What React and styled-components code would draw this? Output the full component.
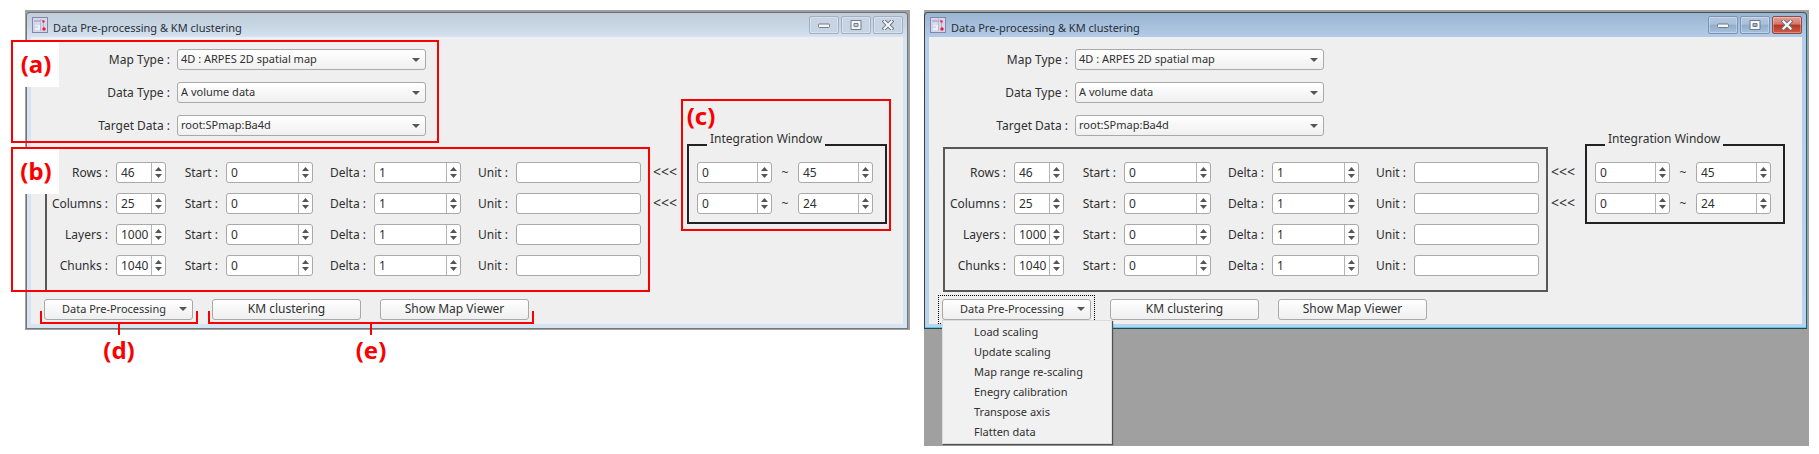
import React, { useId, useState } from "react";
import styled, { createGlobalStyle, css } from "styled-components";

const GlobalStyle = createGlobalStyle`
  *, *::before, *::after { box-sizing: border-box; }
  body {
    margin: 0;
    background: #fff;
    color: #303030;
    font-family: "Noto Sans", "Open Sans", sans-serif;
    font-size: 12px;
    line-height: 18px;
  }
  button, input, select { font: inherit; color: inherit; }
`;

const RED = "#fb0000";

/* ---------- page ---------- */

const Figure = styled.main`
  display: grid;
  grid-template-columns: 1fr 1fr;
  gap: 14px;
  min-height: 100vh;
  padding: 10px 10px 8px 25px;
`;

const Desktop = styled.section`
  align-self: ${(p) => (p.$fill ? "stretch" : "start")};
  min-width: 885px;
  padding: ${(p) => (p.$fill ? "2px 2px 0 0" : "2px 2px 1px 1px")};
  background: #a0a0a0;
`;

/* ---------- window frame ---------- */

const Window = styled.div`
  padding: 0 4px 4px;
  border: 1px solid;
  border-radius: 4px 4px 0 0;
  ${(p) =>
    p.$active
      ? css`
          border-color: #4a4f55 #17687c #1c4a58 #3c4248;
          background: linear-gradient(#9ab4d2, #b5cde8 26px, #bbd2ec);
          box-shadow: inset 0 -1px #5cc8e6;
        `
      : css`
          border-color: #6b6e72 #747678 #747678 #747678;
          background: linear-gradient(#c0cedc, #c9d7e5 14px, #d7e4f2 26px);
        `}
`;

const TitleBar = styled.header`
  display: flex;
  align-items: center;
  height: 24px;
  padding-left: 1px;
`;

const Title = styled.h1`
  flex: 1;
  margin: 5px 0 0 5px;
  font-size: 11px;
  font-weight: 400;
  line-height: 16px;
  color: #2a2f36;
`;

const Caption = styled.div`
  display: flex;
  gap: 2px;
`;

const CaptionButton = styled.button`
  display: grid;
  place-items: center;
  width: 30px;
  height: 18px;
  padding: 0;
  border: 1px solid ${(p) => (p.$tone === "idle" ? "#a2b0c2" : p.$tone === "close" ? "#8c4a4a" : "#7c93b4")};
  border-radius: 2px;
  box-shadow: inset 0 0 0 1px rgba(255, 255, 255, 0.3);
  background: ${(p) =>
    p.$tone === "idle"
      ? "#c6d4e3"
      : p.$tone === "close"
        ? "linear-gradient(#e2a097, #d4776a 45%, #b83420 50%, #cf5b45)"
        : "linear-gradient(#b4c8df, #a9c0da 45%, #92adcc 50%, #a6c0dd)"};
`;

const Client = styled.div`
  padding: 12px 0 4px;
  background: #efefef;
`;

/* ---------- form parts ---------- */

const SourceForm = styled.div`
  position: relative;
  display: grid;
  grid-template-columns: 139px 249px;
  gap: 12px 7px;
  width: max-content;
`;

const FieldLabel = styled.label`
  justify-self: end;
  line-height: 21px;
  white-space: nowrap;
`;

const SelectBox = styled.div`
  display: grid;
  grid-template-columns: 1fr 14px;
  align-items: center;
`;

const Select = styled.select`
  grid-area: 1 / 1 / 2 / 3;
  appearance: none;
  height: 21px;
  padding: 0 3px 2px;
  border: 1px solid #a9a9a9;
  border-radius: 3px;
  background: linear-gradient(#fff, #f0f0f0);
  font-size: 11px;
  line-height: 16px;
`;

const DropMark = styled.span`
  grid-area: 1 / 2;
  width: 0;
  border: 4px solid transparent;
  border-top-color: #555;
  border-bottom: 0;
  pointer-events: none;
`;

const Middle = styled.div`
  display: flex;
  align-items: flex-start;
  padding: 11px 0 7px 14px;
`;

const Anchor = styled.div`
  position: relative;
`;

const AxisPanel = styled.div`
  display: grid;
  grid-template-columns: 61px 50px 44px 87px 45px 87px 39px 125px;
  gap: 10px 8px;
  padding: 13px 7px 14px 0;
  border: 2px solid #585858;
`;

const SpinBox = styled.div`
  display: grid;
  grid-template-columns: 1fr 14px;
  height: 21px;
  border: 1px solid #a9a9a9;
  border-radius: 3px;
  background: #fff;
`;

const SpinInput = styled.input`
  appearance: textfield;
  min-width: 0;
  padding: 0 0 0 4px;
  border: 0;
  background: none;
  outline: none;
  &::-webkit-inner-spin-button { appearance: none; }
`;

const Steps = styled.div`
  display: flex;
  flex-direction: column;
  justify-content: center;
  gap: 3px;
  border-left: 1px solid #b4b4b4;
`;

const StepButton = styled.button`
  display: grid;
  place-items: center;
  height: 4px;
  padding: 0;
  border: 0;
  background: none;
`;

const TextInput = styled.input`
  height: 21px;
  min-width: 0;
  padding: 0 4px;
  border: 1px solid #a9a9a9;
  border-radius: 3px;
  background: #fff;
`;

const Pointers = styled.div`
  display: grid;
  gap: 10px;
  width: 37px;
  padding: 14px 0 0 3px;
  font-size: 14px;
  line-height: 21px;
`;

const RangeAnchor = styled(Anchor)`
  margin-top: -17px;
`;

const RangeGroup = styled.fieldset`
  display: grid;
  grid-template-columns: 75px 26px 75px;
  row-gap: 10px;
  margin: 0;
  padding: 2px 12px 8px 8px;
  border: 2px solid #222;
`;

const RangeLegend = styled.legend`
  margin-left: 10px;
  padding: 0 3px 12px;
  white-space: nowrap;
`;

const Tilde = styled.span`
  line-height: 21px;
  text-align: center;
`;

/* ---------- buttons and menu ---------- */

const Actions = styled.div`
  display: flex;
  gap: 19px;
  padding-left: 13px;
`;

const ActionPair = styled(Anchor)`
  display: flex;
  gap: 19px;
`;

const PushButton = styled.button`
  display: flex;
  align-items: center;
  justify-content: center;
  width: 149px;
  height: 21px;
  padding: 0 0 1px;
  border: 1px solid #a9a9a9;
  border-radius: 3px;
  background: linear-gradient(#fff, #efefef);
  white-space: nowrap;
`;

const MenuButton = styled(PushButton)`
  justify-content: space-between;
  padding: 0 5px 1px 17px;
  font-size: 11px;
`;

const FocusMark = styled.span`
  position: absolute;
  inset: -4px;
  border: 1px dotted #000;
  pointer-events: none;
`;

const Menu = styled.ul`
  position: absolute;
  z-index: 2;
  top: 100%;
  left: 0;
  width: 170px;
  margin: 0;
  padding: 1px 0;
  border: 1px solid #dcdcdc;
  background: #f1f1f1;
  box-shadow: 1px 1px 1px #505050;
  list-style: none;
`;

const MenuItem = styled.button`
  display: block;
  width: 100%;
  height: 20px;
  padding: 0 0 0 31px;
  border: 0;
  background: none;
  font-size: 11px;
  text-align: left;
`;

/* ---------- callouts ---------- */

const Callout = styled.div`
  position: absolute;
  z-index: 1;
  inset: ${(p) => p.$inset};
  border: 2px solid ${RED};
  pointer-events: none;
`;

const Tag = styled.strong`
  display: grid;
  place-items: center;
  width: ${(p) => (p.$solid ? 46 : 36)}px;
  height: ${(p) => (p.$solid ? 45 : 30)}px;
  padding-bottom: 2px;
  background: ${(p) => (p.$solid ? "#fff" : "none")};
  color: ${RED};
  font-size: 24px;
  line-height: 30px;
`;

const Bracket = styled.div`
  position: absolute;
  z-index: 1;
  inset: 12px -5px -4px -4px;
  border: 2px solid ${RED};
  border-top: 0;
  pointer-events: none;
`;

const BracketTag = styled.div`
  position: absolute;
  top: 100%;
  left: 0;
  right: 0;
  display: flex;
  flex-direction: column;
  align-items: center;
  &::before {
    content: "";
    width: 2px;
    height: 13px;
    background: ${RED};
  }
`;

/* ---------- drawings ---------- */

const IconFrame = styled.svg`
  display: block;
  flex: none;
`;

const PanelIcon = () => (
  <IconFrame width="16" height="16" viewBox="0 0 16 16" aria-hidden="true">
    <rect x="0.5" y="0.5" width="15" height="15" fill="#d6d6f0" stroke="#8485aa" />
    <path d="M2 3h6v2H2z" fill="#b4b8cc" />
    <path d="M3 6h5v7H3z" fill="#eef0f8" />
    <path d="M2 7h6M2 10h4" stroke="#c0c4d4" />
    <path d="M8.5 2v12" stroke="#b5b7d2" />
    <path d="M11.5 3v9" stroke="#c9a6c0" />
    <path d="M9.5 3.5h2" stroke="#d88" />
    <circle cx="11.5" cy="4.5" r="1.3" fill="#e03c44" />
    <circle cx="12" cy="12" r="1.7" fill="#e81f2c" />
  </IconFrame>
);

const MinimizeIcon = () => (
  <svg width="12" height="10" viewBox="0 0 12 10" aria-hidden="true">
    <rect x="0.5" y="4" width="11" height="3.5" rx="1" fill="#f6f6f6" stroke="#6f7a8a" />
  </svg>
);

const MaximizeIcon = () => (
  <svg width="12" height="10" viewBox="0 0 12 10" aria-hidden="true">
    <path d="M1 .5h10v9H1zM4 3.5h4v3H4z" fill="#f6f6f6" fillRule="evenodd" stroke="#6f7a8a" />
  </svg>
);

const CloseIcon = () => (
  <svg width="12" height="10" viewBox="0 0 12 10" aria-hidden="true">
    <path d="M2.5 1.5l7 7M9.5 1.5l-7 7" stroke="#656f7e" strokeWidth="4" strokeLinecap="square" />
    <path d="M2.5 1.5l7 7M9.5 1.5l-7 7" stroke="#f6f6f6" strokeWidth="2.2" strokeLinecap="square" />
  </svg>
);

const StepIcon = ({ up }) => (
  <svg width="7" height="4" viewBox="0 0 7 4" aria-hidden="true">
    <path d={up ? "M0 4L3.5 0 7 4z" : "M0 0L3.5 4 7 0z"} fill="#555" />
  </svg>
);

/* ---------- composed controls ---------- */

function SelectField({ label, value }) {
  const id = useId();
  return (
    <>
      <FieldLabel htmlFor={id}>{label} :</FieldLabel>
      <SelectBox>
        <Select id={id} defaultValue={value}>
          <option>{value}</option>
        </Select>
        <DropMark />
      </SelectBox>
    </>
  );
}

function Spin({ initial, id, name }) {
  const [value, setValue] = useState(initial);
  return (
    <SpinBox>
      <SpinInput
        type="number"
        id={id}
        aria-label={name}
        value={value}
        onChange={(e) => setValue(e.target.value)}
      />
      <Steps>
        <StepButton type="button" aria-label="Increase" onClick={() => setValue(Number(value) + 1)}>
          <StepIcon up />
        </StepButton>
        <StepButton type="button" aria-label="Decrease" onClick={() => setValue(Number(value) - 1)}>
          <StepIcon />
        </StepButton>
      </Steps>
    </SpinBox>
  );
}

function SpinField({ label, initial }) {
  const id = useId();
  return (
    <>
      <FieldLabel htmlFor={id}>{label} :</FieldLabel>
      <Spin id={id} initial={initial} />
    </>
  );
}

function AxisRow({ name, size }) {
  const unitId = useId();
  return (
    <>
      <SpinField label={name} initial={size} />
      <SpinField label="Start" initial={0} />
      <SpinField label="Delta" initial={1} />
      <FieldLabel htmlFor={unitId}>Unit :</FieldLabel>
      <TextInput id={unitId} type="text" />
    </>
  );
}

const AXES = [
  ["Rows", 46],
  ["Columns", 25],
  ["Layers", 1000],
  ["Chunks", 1040],
];

const RANGES = [
  ["Rows", 0, 45],
  ["Columns", 0, 24],
];

const MENU_ITEMS = [
  "Load scaling",
  "Update scaling",
  "Map range re-scaling",
  "Enegry calibration",
  "Transpose axis",
  "Flatten data",
];

function ClusteringWindow({ active, annotated }) {
  const [open, setOpen] = useState(Boolean(active));
  return (
    <Window $active={active}>
      <TitleBar>
        <PanelIcon />
        <Title>Data Pre-processing &amp; KM clustering</Title>
        <Caption>
          <CaptionButton type="button" aria-label="Minimize" $tone={active ? "live" : "idle"}>
            <MinimizeIcon />
          </CaptionButton>
          <CaptionButton type="button" aria-label="Maximize" $tone={active ? "live" : "idle"}>
            <MaximizeIcon />
          </CaptionButton>
          <CaptionButton type="button" aria-label="Close" $tone={active ? "close" : "idle"}>
            <CloseIcon />
          </CaptionButton>
        </Caption>
      </TitleBar>

      <Client>
        <SourceForm>
          <SelectField label="Map Type" value="4D : ARPES 2D spatial map" />
          <SelectField label="Data Type" value="A volume data" />
          <SelectField label="Target Data" value="root:SPmap:Ba4d" />
          {annotated && (
            <Callout $inset="-9px -13px -7px -20px">
              <Tag $solid>(a)</Tag>
            </Callout>
          )}
        </SourceForm>

        <Middle>
          <Anchor>
            <AxisPanel>
              {AXES.map(([name, size]) => (
                <AxisRow key={name} name={name} size={size} />
              ))}
            </AxisPanel>
            {annotated && (
              <Callout $inset="0 0 0 -34px">
                <Tag $solid>(b)</Tag>
              </Callout>
            )}
          </Anchor>
          <Pointers>
            <span>&lt;&lt;&lt;</span>
            <span>&lt;&lt;&lt;</span>
          </Pointers>
          <RangeAnchor>
            <RangeGroup>
              <RangeLegend>Integration Window</RangeLegend>
              {RANGES.map(([name, from, to]) => (
                <React.Fragment key={name}>
                  <Spin name={`${name} from`} initial={from} />
                  <Tilde>~</Tilde>
                  <Spin name={`${name} to`} initial={to} />
                </React.Fragment>
              ))}
            </RangeGroup>
            {annotated && (
              <Callout $inset="-31px -4px -7px -6px">
                <Tag>(c)</Tag>
              </Callout>
            )}
          </RangeAnchor>
        </Middle>

        <Actions>
          <Anchor>
            <MenuButton
              type="button"
              aria-haspopup="menu"
              aria-expanded={open}
              onClick={() => setOpen(!open)}
            >
              Data Pre-Processing
              <DropMark />
            </MenuButton>
            {open && <FocusMark />}
            {open && (
              <Menu role="menu">
                {MENU_ITEMS.map((item) => (
                  <li key={item} role="none">
                    <MenuItem type="button" role="menuitem">
                      {item}
                    </MenuItem>
                  </li>
                ))}
              </Menu>
            )}
            {annotated && (
              <Bracket>
                <BracketTag>
                  <Tag>(d)</Tag>
                </BracketTag>
              </Bracket>
            )}
          </Anchor>
          <ActionPair>
            <PushButton type="button">KM clustering</PushButton>
            <PushButton type="button">Show Map Viewer</PushButton>
            {annotated && (
              <Bracket>
                <BracketTag>
                  <Tag>(e)</Tag>
                </BracketTag>
              </Bracket>
            )}
          </ActionPair>
        </Actions>
      </Client>
    </Window>
  );
}

export default function App() {
  return (
    <>
      <GlobalStyle />
      <Figure>
        <Desktop>
          <ClusteringWindow annotated />
        </Desktop>
        <Desktop $fill>
          <ClusteringWindow active />
        </Desktop>
      </Figure>
    </>
  );
}
